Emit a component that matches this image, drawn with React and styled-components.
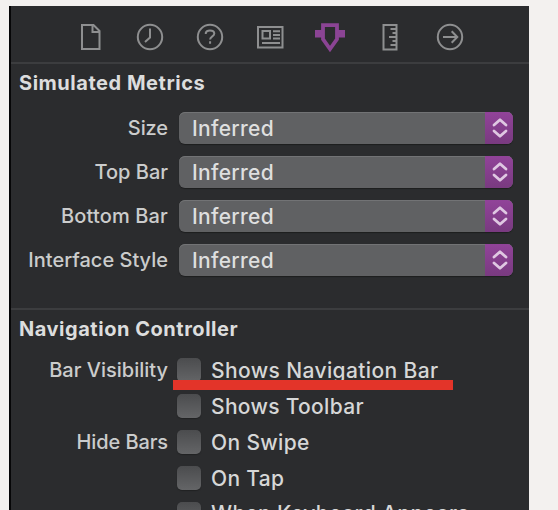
import React from 'react';
import styled, { createGlobalStyle } from 'styled-components';

const GlobalStyle = createGlobalStyle`
  *, *::before, *::after { box-sizing: border-box; }
  body { margin: 0; background: #f3f1ef; overflow: hidden; }
`;

const Page = styled.main`
  height: 510px;
  padding: 6px 29px 0 9px;
  overflow: hidden;
  background: #f3f1ef;
  font-family: Inter, "Liberation Sans", sans-serif;
  font-size: 20px;
  font-weight: 500;
  line-height: 24px;
  color: #d6d7d7;
`;

const Inspector = styled.div`
  height: 504px;
  overflow: hidden;
  background: #2b2c2e;
  border-left: 2px solid #060607;
`;

const TabBar = styled.nav`
  display: grid;
  grid-template-columns: repeat(7, 60px);
  height: 58px;
  padding-left: 49px;
  padding-top: 13px;
  border-bottom: 2px solid #3c3d3f;
`;

const Tab = styled.button`
  display: flex;
  justify-content: center;
  height: 36px;
  padding: 0;
  border: 0;
  background: none;
  color: ${({ $active }) => ($active ? '#8b4494' : '#8e8f90')};
`;

const Icon = styled.svg`
  width: 36px;
  height: 36px;
  fill: none;
  stroke: currentColor;
  stroke-width: 2;
`;

const Section = styled.section`
  height: ${({ $height }) => $height}px;
  border-bottom: 2px solid #3c3d3f;
`;

const Heading = styled.h2`
  margin: 0;
  padding: 7px 0 0 8px;
  height: 48px;
  font-size: 20px;
  line-height: 24px;
  font-weight: 700;
  letter-spacing: 0.53px;
  white-space: nowrap;
  color: #dcdddd;
`;

const Row = styled.div`
  display: grid;
  grid-template-columns: 157px 1fr;
  column-gap: ${({ $gap }) => $gap}px;
  align-items: center;
  height: ${({ $height }) => $height}px;
  margin-bottom: 12px;
`;

const Label = styled.span`
  text-align: right;
  white-space: nowrap;
  letter-spacing: ${({ $tracking }) => $tracking}px;
  color: #cbcccc;
`;

const Select = styled.button`
  display: flex;
  align-items: center;
  justify-content: space-between;
  width: 334px;
  height: 32px;
  padding: 0 0 0 13px;
  border: 0;
  border-radius: 6px;
  overflow: hidden;
  background: #606163;
  box-shadow: inset 0 1px #727375, 0 1px 1px #1d1e1f;
  font: inherit;
  font-size: 21px;
  letter-spacing: 0.3px;
  color: #dedfdf;
`;

const ControlText = styled.span`
  padding-top: ${({ $inset = 2 }) => $inset}px;
  line-height: 22px;
`;

const Stepper = styled.span`
  display: flex;
  width: 28px;
  height: 32px;
  background: linear-gradient(#914399, #793a80);
  color: #dfc7e2;
`;

const Arrows = styled.svg`
  width: 28px;
  height: 32px;
  fill: none;
  stroke: currentColor;
  stroke-width: 2.8;
  stroke-linecap: round;
  stroke-linejoin: round;
`;

const Option = styled.label`
  position: relative;
  display: flex;
  align-items: center;
  gap: 10px;
  height: 24px;
  white-space: nowrap;
  font-size: 21px;
  letter-spacing: ${({ $tracking }) => $tracking}px;
`;

const Checkbox = styled.input`
  appearance: none;
  flex: none;
  width: 24px;
  height: 24px;
  margin: 0;
  border-radius: 5px;
  background: linear-gradient(#4b4c4e, #646567);
  box-shadow: 0 1px 1px #212223;
`;

const Underline = styled.span`
  position: absolute;
  left: -4px;
  top: 22px;
  width: 280px;
  height: 10px;
  background: #e33429;
`;

const tabs = [
  { name: 'File', art: <path d="M10 6h11.5l6 6v18H10zM20.5 6v7h7" /> },
  { name: 'History', art: <><circle cx="18" cy="18" r="12.2" /><path d="M18 9.5V18.5l-5 4.5" /></> },
  {
    name: 'Help',
    art: (
      <>
        <circle cx="18" cy="18" r="12.2" />
        <path d="M13.8 15v-1.2q.6-2.3 4.1-2.3 4.4 0 4.4 3.1c0 3-4.2 2.6-4.2 6M18.1 22.3v2.4" />
      </>
    ),
  },
  {
    name: 'Identity',
    art: <path d="M6 8h24.5v20.5H6zM10.5 12h7.5v7.5h-7.5zM21 12.3h7M21 16h7M21 19.5h7M10 24h18" />,
  },
  {
    name: 'Attributes',
    active: true,
    art: (
      <>
        <path d="M11 6.2h14v14L18 30l-7-9.8z" strokeWidth="3.8" />
        <path d="M3 11h7v7.5H3zM26 11h7v7.5h-7z" fill="currentColor" stroke="none" />
      </>
    ),
  },
  {
    name: 'Size',
    art: <path d="M11.5 6h13v24.5h-13zM18.5 10H24M20.5 14H24M17 18h7M20.5 22H24M18.5 26H24" />,
  },
  { name: 'Connections', art: <><circle cx="18" cy="18" r="12.2" /><path d="M11 18h14M19.7 12.3l5.6 5.7-5.6 5.7" /></> },
];

const metrics = [
  ['Size', -0.1],
  ['Top Bar', 0],
  ['Bottom Bar', 0.15],
  ['Interface Style', 0],
];

const options = [
  { label: 'Bar Visibility', lt: 0, text: 'Shows Navigation Bar', ot: 0.39, marked: true },
  { label: '', lt: 0, text: 'Shows Toolbar', ot: 0.31 },
  { label: 'Hide Bars', lt: -0.1, text: 'On Swipe', ot: 0.35 },
  { label: '', lt: 0, text: 'On Tap', ot: 0.3 },
  { label: '', lt: 0, text: 'When Keyboard Appears', ot: 0.35, inset: 0 },
];

export default function App() {
  return (
    <Page>
      <GlobalStyle />
      <Inspector>
        <TabBar>
          {tabs.map(({ name, art, active }) => (
            <Tab key={name} aria-label={name} $active={active}>
              <Icon viewBox="0 0 36 36">{art}</Icon>
            </Tab>
          ))}
        </TabBar>
        <Section $height={246}>
          <Heading>Simulated Metrics</Heading>
          {metrics.map(([name, tracking]) => (
            <Row key={name} $gap={11} $height={32}>
              <Label $tracking={tracking}>{name}</Label>
              <Select>
                <ControlText>Inferred</ControlText>
                <Stepper>
                  <Arrows viewBox="0 0 28 32">
                    <path d="M9 13l6-5.3 6 5.3M9 19l6 5.3 6-5.3" />
                  </Arrows>
                </Stepper>
              </Select>
            </Row>
          ))}
        </Section>
        <Heading>Navigation Controller</Heading>
        {options.map(({ label, lt, text, ot, marked, inset }) => (
          <Row key={text} $gap={9} $height={24}>
            <Label $tracking={lt}>{label}</Label>
            <Option $tracking={ot}>
              <Checkbox type="checkbox" />
              <ControlText $inset={inset}>{text}</ControlText>
              {marked && <Underline />}
            </Option>
          </Row>
        ))}
      </Inspector>
    </Page>
  );
}
